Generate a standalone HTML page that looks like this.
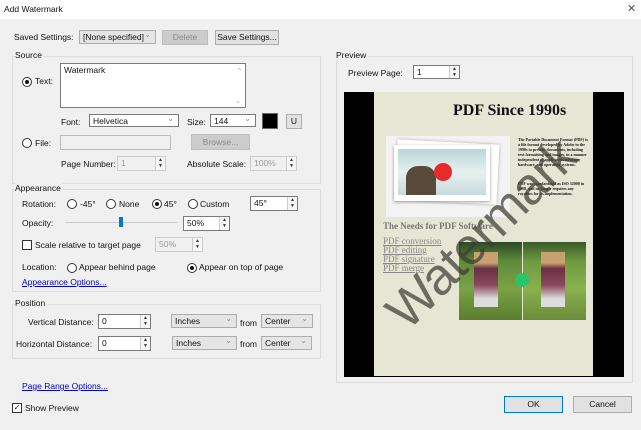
<!DOCTYPE html>
<html><head><style>
*{box-sizing:border-box;margin:0;padding:0}
body{width:641px;height:430px;background:#f0f0f0;font-family:"Liberation Sans",Arial,sans-serif;font-size:8.5px;color:#111;position:relative;overflow:hidden}
.a{position:absolute;white-space:nowrap}
.hdr{position:absolute;left:0;top:0;width:641px;height:19px;background:#fff}
.grp{position:absolute;border:1px solid #dcdcdc}
.in{position:absolute;background:#fff;border:1px solid #7a7a7a;padding:1px 3px;font-size:8.5px;line-height:11px;white-space:nowrap}
.dis{background:#f0f0f0;border-color:#ccc;color:#999}
.sel{position:absolute;background:#e5e5e5;border:1px solid #adadad;padding:1px 3px;font-size:8.5px;line-height:11px;white-space:nowrap}
.sel.w{background:#fff;border-color:#7a7a7a}
.sel:after{content:"⌄";position:absolute;right:4px;top:-2px;color:#888;font-size:8px}
.btn{position:absolute;background:#e1e1e1;border:1px solid #adadad;text-align:center;font-size:8.5px;line-height:13px;white-space:nowrap}
.btn.d{background:#ccc;border-color:#bfbfbf;color:#8a8a8a}
.spin{position:absolute;width:10px;border-left:1px solid #ccc;right:0;top:0;bottom:0;background:#f6f6f6;font-size:5px;line-height:6px;text-align:center;color:#333}
.r{position:absolute;width:10px;height:10px;border:1px solid #333;border-radius:50%;background:#fff}
.r.on:after{content:"";position:absolute;left:2px;top:2px;width:4px;height:4px;border-radius:50%;background:#111}
.cb{position:absolute;width:10px;height:10px;border:1px solid #333;background:#fff}
.lnk{color:#0000cc;text-decoration:underline}
</style></head><body>
<div class="hdr"></div>
<div class="a" style="left:4px;top:4px">Add Watermark</div>
<div class="a" style="left:627px;top:2px;font-size:11px;color:#555">✕</div>

<div class="a" style="left:14px;top:32px">Saved Settings:</div>
<div class="sel" style="left:79px;top:30px;width:77px;height:14px">[None specified]</div>
<div class="btn d" style="left:162px;top:30px;width:46px;height:15px">Delete</div>
<div class="btn" style="left:215px;top:30px;width:64px;height:15px">Save Settings...</div>

<div class="grp" style="left:12px;top:56px;width:309px;height:128px"></div>
<div class="a" style="left:15px;top:50px;background:#f0f0f0;padding-right:2px">Source</div>
<div class="r on" style="left:22px;top:77px"></div><div class="a" style="left:35px;top:76px">Text:</div>
<div class="in" style="left:60px;top:63px;width:186px;height:45px">Watermark<div class="a" style="right:4px;top:2px;color:#aaa;font-size:7px">^</div><div class="a" style="right:4px;top:32px;color:#aaa;font-size:7px">⌄</div></div>
<div class="a" style="left:61px;top:117px">Font:</div>
<div class="sel w" style="left:89px;top:114px;width:90px;height:13px">Helvetica</div>
<div class="a" style="left:187px;top:117px">Size:</div>
<div class="sel w" style="left:210px;top:114px;width:46px;height:13px">144</div>
<div class="a" style="left:262px;top:113px;width:16px;height:16px;background:#000;border:1px solid #666"></div>
<div class="btn" style="left:286px;top:114px;width:16px;height:15px">U</div>
<div class="r" style="left:22px;top:138px"></div><div class="a" style="left:35px;top:138px">File:</div>
<div class="in" style="left:60px;top:135px;width:111px;height:15px;background:#f0f0f0;border-color:#bbb"></div>
<div class="btn d" style="left:191px;top:134px;width:59px;height:16px;line-height:14px">Browse...</div>
<div class="a" style="left:61px;top:159px">Page Number:</div>
<div class="in dis" style="left:117px;top:156px;width:49px;height:15px">1<div class="spin" style="border-color:#ccc">▲<br>▼</div></div>
<div class="a" style="left:187px;top:159px">Absolute Scale:</div>
<div class="in dis" style="left:250px;top:156px;width:47px;height:15px">100%<div class="spin">▲<br>▼</div></div>

<div class="grp" style="left:12px;top:189px;width:309px;height:103px"></div>
<div class="a" style="left:15px;top:183px;background:#f0f0f0;padding-right:2px">Appearance</div>
<div class="a" style="left:22px;top:199px">Rotation:</div>
<div class="r" style="left:67px;top:199px"></div><div class="a" style="left:80px;top:199px">-45°</div>
<div class="r" style="left:106px;top:199px"></div><div class="a" style="left:119px;top:199px">None</div>
<div class="r on" style="left:152px;top:199px"></div><div class="a" style="left:164px;top:199px">45°</div>
<div class="r" style="left:188px;top:199px"></div><div class="a" style="left:200px;top:199px">Custom</div>
<div class="in" style="left:250px;top:196px;width:48px;height:15px">45°<div class="spin">▲<br>▼</div></div>
<div class="a" style="left:22px;top:218px">Opacity:</div>
<div class="a" style="left:65px;top:222px;width:112px;height:1px;background:#ccc"></div>
<div class="a" style="left:119px;top:217px;width:4px;height:10px;background:#0078d7"></div>
<div class="in" style="left:183px;top:216px;width:47px;height:15px">50%<div class="spin">▲<br>▼</div></div>
<div class="cb" style="left:22px;top:240px"></div><div class="a" style="left:35px;top:240px">Scale relative to target page</div>
<div class="in dis" style="left:155px;top:237px;width:48px;height:15px">50%<div class="spin">▲<br>▼</div></div>
<div class="a" style="left:22px;top:262px">Location:</div>
<div class="r" style="left:67px;top:263px"></div><div class="a" style="left:79px;top:262px">Appear behind page</div>
<div class="r on" style="left:187px;top:263px"></div><div class="a" style="left:199px;top:262px">Appear on top of page</div>
<div class="a lnk" style="left:22px;top:277px">Appearance Options...</div>

<div class="grp" style="left:12px;top:304px;width:309px;height:55px"></div>
<div class="a" style="left:15px;top:298px;background:#f0f0f0;padding-right:2px">Position</div>
<div class="a" style="left:28px;top:317px">Vertical Distance:</div>
<div class="in" style="left:98px;top:314px;width:53px;height:15px">0<div class="spin">▲<br>▼</div></div>
<div class="sel" style="left:171px;top:314px;width:66px;height:14px">Inches</div>
<div class="a" style="left:240px;top:318px">from</div>
<div class="sel" style="left:261px;top:314px;width:52px;height:14px">Center</div>
<div class="a" style="left:16px;top:339px">Horizontal Distance:</div>
<div class="in" style="left:98px;top:336px;width:53px;height:15px">0<div class="spin">▲<br>▼</div></div>
<div class="sel" style="left:172px;top:336px;width:65px;height:14px">Inches</div>
<div class="a" style="left:240px;top:339px">from</div>
<div class="sel" style="left:261px;top:336px;width:51px;height:14px">Center</div>

<div class="a lnk" style="left:22px;top:381px">Page Range Options...</div>
<div class="cb" style="left:12px;top:403px;font-size:8px;line-height:8px;text-align:center">✓</div>
<div class="a" style="left:25px;top:403px">Show Preview</div>
<div class="btn" style="left:504px;top:396px;width:59px;height:17px;line-height:15px;border-color:#0078d7">OK</div>
<div class="btn" style="left:573px;top:396px;width:59px;height:17px;line-height:15px">Cancel</div>

<div class="grp" style="left:336px;top:56px;width:297px;height:327px"></div>
<div class="a" style="left:336px;top:50px;background:#f0f0f0;padding-right:2px">Preview</div>
<div class="a" style="left:348px;top:68px">Preview Page:</div>
<div class="in" style="left:413px;top:65px;width:47px;height:14px">1<div class="spin">▲<br>▼</div></div>

<div class="a" style="left:344px;top:92px;width:280px;height:285px;background:#000"></div>
<div class="a" style="left:374px;top:92px;width:219px;height:284px;background:#e6e6d5;overflow:hidden">
 <div class="a" style="left:79px;top:10px;font-family:'Liberation Serif',serif;font-weight:bold;font-size:16px">PDF Since 1990s</div>
 <div class="a" style="left:12px;top:44px;width:124px;height:81px;background:#f3f3f3"></div>
 <div class="a" style="left:22px;top:50px;width:102px;height:60px;background:#fff;transform:rotate(3deg);box-shadow:0 0 3px #aaa"></div>
 <div class="a" style="left:20px;top:53px;width:96px;height:56px;background:#fff;box-shadow:0 1px 3px #999"></div>
 <div class="a" style="left:24px;top:57px;width:88px;height:46px;background:linear-gradient(#b8d6d8,#e8f0f0 50%,#c8dade)"></div>
 <div class="a" style="left:32px;top:74px;width:30px;height:29px;background:#5a4a3c;border-radius:40% 40% 0 0"></div>
 <div class="a" style="left:60px;top:71px;width:18px;height:18px;background:#e52b2b;border-radius:50%"></div>
 <div class="a" style="left:144px;top:45px;width:70px;height:34px;font-family:'Liberation Serif',serif;font-size:4px;line-height:5px;white-space:normal;font-weight:bold">The Portable Document Format (PDF) is a file format developed by Adobe in the 1990s to present documents, including text formatting and images, in a manner independent of application software, hardware, and operating systems.</div>
 <div class="a" style="left:144px;top:89px;width:70px;height:16px;font-family:'Liberation Serif',serif;font-size:4px;line-height:5px;white-space:normal;font-weight:bold">PDF was standardized as ISO 32000 in 2008, and no longer requires any royalties for its implementation.</div>
 <div class="a" style="left:9px;top:129px;font-family:'Liberation Serif',serif;font-weight:bold;font-size:9px;color:#777">The Needs for PDF Software</div>
 <div class="a" style="left:9px;top:145px;font-family:'Liberation Serif',serif;font-size:9px;line-height:9px;color:#888;text-decoration:underline">PDF conversion<br>PDF editing<br>PDF signature<br>PDF merge</div>
 <div class="a" style="left:85px;top:150px;width:63px;height:78px;background:linear-gradient(#2c4a26,#5f8a3a 25%,#7aa246 60%,#5b7d2e)"></div>
 <div class="a" style="left:149px;top:150px;width:63px;height:78px;background:linear-gradient(#3a5a2a,#6e9a40 25%,#8ab04e 60%,#6a8c38)"></div>
 <div class="a" style="left:100px;top:160px;width:24px;height:55px;background:linear-gradient(#c9a070 20%,#6a3040 30%,#8a4860 60%,#ddd 85%)"></div>
 <div class="a" style="left:167px;top:160px;width:24px;height:55px;background:linear-gradient(#c9a070 20%,#6a3040 30%,#8a4860 60%,#ddd 85%)"></div>
 <div class="a" style="left:141px;top:181px;width:14px;height:14px;border-radius:50%;background:#2cc36b"></div>
 <div class="a" style="left:-14px;top:112px;font-size:52px;color:rgba(60,60,50,.72);transform:rotate(-45deg);transform-origin:50% 50%;letter-spacing:-1px">Watermark</div>
</div>
</body></html>
